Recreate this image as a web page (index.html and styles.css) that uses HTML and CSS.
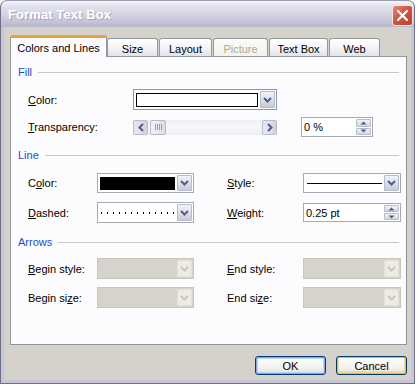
FILE: index.html
```html
<!DOCTYPE html>
<html>
<head>
<meta charset="utf-8">
<link rel="stylesheet" href="styles.css">
</head>
<body>
<div class="win">
  <div class="titlebar">
    <span class="title">Format Text Box</span>
    <span class="close"><svg width="13" height="13" viewBox="0 0 13 13"><path d="M2 2 L11 11 M11 2 L2 11" stroke="#fff" stroke-width="2.2" stroke-linecap="round"/></svg></span>
  </div>
  <div class="client">
    <div class="tabs">
      <div class="tab active t1">Colors and Lines</div>
      <div class="tab t2">Size</div>
      <div class="tab t3">Layout</div>
      <div class="tab disabled t4">Picture</div>
      <div class="tab t5">Text Box</div>
      <div class="tab t6">Web</div>
    </div>
    <div class="panel">
      <div class="section first"><span>Fill</span><i></i></div>
      <div class="fillrow r-color">
        <span class="lbl"><u>C</u>olor:</span>
        <div class="combo focus">
          <div class="field"><div class="swatch white"></div></div>
          <div class="dbtn"><svg width="9" height="6" viewBox="0 0 9 6"><path d="M1 1 L4.5 4.5 L8 1" fill="none" stroke="#4d6185" stroke-width="2"/></svg></div>
        </div>
      </div>
      <div class="fillrow r-trans">
        <span class="lbl"><u>T</u>ransparency:</span>
        <div class="scroll">
          <div class="sbtn"><svg width="6" height="9" viewBox="0 0 6 9"><path d="M5 1 L1.5 4.5 L5 8" fill="none" stroke="#4d6185" stroke-width="2"/></svg></div>
          <div class="thumb"><i></i><i></i><i></i><i></i></div>
          <div class="track"></div>
          <div class="sbtn"><svg width="6" height="9" viewBox="0 0 6 9"><path d="M1 1 L4.5 4.5 L1 8" fill="none" stroke="#4d6185" stroke-width="2"/></svg></div>
        </div>
        <div class="spin s-trans">
          <span class="val">0 %</span>
          <div class="arrows">
            <div class="ab"><svg width="7" height="4" viewBox="0 0 7 4"><path d="M0.5 3.5 L3.5 0.5 L6.5 3.5 Z" fill="#4d6185"/></svg></div>
            <div class="ab"><svg width="7" height="4" viewBox="0 0 7 4"><path d="M0.5 0.5 L3.5 3.5 L6.5 0.5 Z" fill="#4d6185"/></svg></div>
          </div>
        </div>
      </div>

      <div class="section s-line"><span>Line</span><i></i></div>
      <div class="grow g1">
        <span class="lbl">C<u>o</u>lor:</span>
        <div class="combo">
          <div class="field"><div class="swatch black"></div></div>
          <div class="dbtn"><svg width="9" height="6" viewBox="0 0 9 6"><path d="M1 1 L4.5 4.5 L8 1" fill="none" stroke="#4d6185" stroke-width="2"/></svg></div>
        </div>
        <span class="lbl"><u>S</u>tyle:</span>
        <div class="combo">
          <div class="field"><div class="solid"></div></div>
          <div class="dbtn"><svg width="9" height="6" viewBox="0 0 9 6"><path d="M1 1 L4.5 4.5 L8 1" fill="none" stroke="#4d6185" stroke-width="2"/></svg></div>
        </div>
      </div>
      <div class="grow g2">
        <span class="lbl"><u>D</u>ashed:</span>
        <div class="combo">
          <div class="field"><div class="dots"></div></div>
          <div class="dbtn"><svg width="9" height="6" viewBox="0 0 9 6"><path d="M1 1 L4.5 4.5 L8 1" fill="none" stroke="#4d6185" stroke-width="2"/></svg></div>
        </div>
        <span class="lbl"><u>W</u>eight:</span>
        <div class="spin s-weight">
          <span class="val">0.25 pt</span>
          <div class="arrows">
            <div class="ab"><svg width="7" height="4" viewBox="0 0 7 4"><path d="M0.5 3.5 L3.5 0.5 L6.5 3.5 Z" fill="#4d6185"/></svg></div>
            <div class="ab"><svg width="7" height="4" viewBox="0 0 7 4"><path d="M0.5 0.5 L3.5 3.5 L6.5 0.5 Z" fill="#4d6185"/></svg></div>
          </div>
        </div>
      </div>

      <div class="section s-arrows"><span>Arrows</span><i></i></div>
      <div class="grow g3">
        <span class="lbl"><u>B</u>egin style:</span>
        <div class="combo dis">
          <div class="field"></div>
          <div class="dbtn"><svg width="9" height="6" viewBox="0 0 9 6"><path d="M1 1 L4.5 4.5 L8 1" fill="none" stroke="#c9c7ba" stroke-width="2"/></svg></div>
        </div>
        <span class="lbl"><u>E</u>nd style:</span>
        <div class="combo dis">
          <div class="field"></div>
          <div class="dbtn"><svg width="9" height="6" viewBox="0 0 9 6"><path d="M1 1 L4.5 4.5 L8 1" fill="none" stroke="#c9c7ba" stroke-width="2"/></svg></div>
        </div>
      </div>
      <div class="grow g4">
        <span class="lbl">Begin si<u>z</u>e:</span>
        <div class="combo dis">
          <div class="field"></div>
          <div class="dbtn"><svg width="9" height="6" viewBox="0 0 9 6"><path d="M1 1 L4.5 4.5 L8 1" fill="none" stroke="#c9c7ba" stroke-width="2"/></svg></div>
        </div>
        <span class="lbl">End si<u>z</u>e:</span>
        <div class="combo dis">
          <div class="field"></div>
          <div class="dbtn"><svg width="9" height="6" viewBox="0 0 9 6"><path d="M1 1 L4.5 4.5 L8 1" fill="none" stroke="#c9c7ba" stroke-width="2"/></svg></div>
        </div>
      </div>
    </div>
    <div class="buttons">
      <div class="btn ok">OK</div>
      <div class="btn cancel">Cancel</div>
    </div>
  </div>
</div>
</body>
</html>
```

FILE: styles.css
```css
html, body {
  margin: 0;
  padding: 0;
}
body {
  width: 419px;
  height: 387px;
  overflow: hidden;
  background: #ffffff;
  font-family: "Liberation Sans", Arial, sans-serif;
  font-size: 11px;
  color: #000;
}
.win {
  width: 415px;
  height: 384px;
  box-sizing: border-box;
  border: 1px solid #6f6f86;
  border-top-color: #9a9ab0;
  border-radius: 7px 7px 0 0;
  background: #c6c6d8;
  display: flex;
  flex-direction: column;
  overflow: hidden;
}
.titlebar {
  height: 26px;
  flex: none;
  display: flex;
  align-items: center;
  justify-content: space-between;
  padding: 0 1px 0 7px;
  background: linear-gradient(to bottom, #f6f6fa 0%, #e4e4ee 18%, #d4d4e2 50%, #c4c4d8 80%, #b6b6cc 100%);
  border-radius: 6px 6px 0 0;
}
.title {
  color: #ffffff;
  font-weight: bold;
  font-size: 13px;
  text-shadow: 1px 1px 0 #a6a6bc;
  letter-spacing: 0.1px;
}
.close {
  width: 21px;
  height: 21px;
  box-sizing: border-box;
  border: 1px solid #f4e8e8;
  border-radius: 3px;
  background: linear-gradient(135deg, #e88a7c 0%, #d1563f 45%, #bf3d2c 100%);
  display: flex;
  align-items: center;
  justify-content: center;
  margin-top: 2px;
}
.client {
  flex: 1;
  margin: 0 3px 3px 3px;
  background: #d5d2cb;
  display: flex;
  flex-direction: column;
  padding: 8px 3px 0 6px;
}
.tabs {
  display: flex;
  align-items: flex-end;
  height: 21px;
  position: relative;
  z-index: 2;
}
.tab {
  box-sizing: border-box;
  height: 18px;
  border: 1px solid #919b9c;
  border-bottom: none;
  border-radius: 3px 3px 0 0;
  background: linear-gradient(to bottom, #ffffff 0%, #f4f4f8 50%, #e2e2ea 100%);
  display: flex;
  align-items: center;
  justify-content: center;
  padding-top: 2px;
  margin-right: 1px;
}
.tab.active {
  height: 22px;
  margin-bottom: -1px;
  background: #fcfcfe;
  border-top: 3px solid #e8a23c;
  padding-top: 0;
  margin-right: 0;
}
.tab.disabled {
  color: #aca899;
  background: linear-gradient(to bottom, #fbfbf7 0%, #f3f2ec 100%);
}
.t1 { width: 97px; }
.t2 { width: 51px; margin-right: 1px; }
.t3 { width: 53px; }
.t4 { width: 55px; margin-right: 1px; }
.t5 { width: 59px; }
.t6 { width: 51px; }

.panel {
  box-sizing: border-box;
  width: 397px;
  height: 289px;
  border: 1px solid #919b9c;
  border-right-color: #8c9495;
  border-bottom-color: #8c9495;
  background: #fcfcfe;
  padding: 0 7px;
  display: flex;
  flex-direction: column;
}
.section {
  display: flex;
  align-items: center;
  height: 14px;
  color: #1a4cc8;
}
.section i {
  flex: 1;
  height: 1px;
  background: #c8c8c0;
  margin-left: 6px;
}
.section.first { margin-top: 8px; }
.s-line { margin-top: 11px; }
.s-arrows { margin-top: 12px; }

.lbl {
  white-space: nowrap;
}
u { text-decoration: underline; text-underline-offset: 1px; }

.fillrow {
  display: grid;
  grid-template-columns: 105px 144px 24px 72px;
  align-items: center;
  padding-left: 10px;
}
.fillrow .spin { grid-column: 4; }
.r-color { height: 21px; margin-top: 10px; }
.r-trans { height: 20px; margin-top: 7px; }

.grow {
  display: grid;
  grid-template-columns: 69px 97px 33px 76px 98px;
  align-items: center;
  padding-left: 10px;
}
.grow > :nth-child(3) { grid-column: 4; }
.g1 { height: 20px; margin-top: 11px; }
.g2 { height: 21px; margin-top: 9px; }
.g3 { height: 21px; margin-top: 9px; }
.g4 { height: 21px; margin-top: 8px; }

.combo {
  box-sizing: border-box;
  height: 100%;
  border: 1px solid #a5acb5;
  background: #ffffff;
  display: flex;
  padding: 1px;
}
.combo.focus {
  border-color: #7f9db9;
}
.combo .field {
  flex: 1;
  display: flex;
  align-items: center;
  padding: 1px 2px 1px 1px;
}
.swatch {
  flex: 1;
  height: 100%;
  box-sizing: border-box;
}
.swatch.white {
  border: 1px solid #000;
  background: #fff;
  height: 14px;
}
.swatch.black {
  background: #000;
  height: 13px;
}
.solid {
  flex: 1;
  height: 1px;
  background: #000;
  margin-left: 1px;
}
.dots {
  flex: 1;
  height: 2px;
  background-image: linear-gradient(to right, #000 0, #000 1px, transparent 1px);
  background-size: 6px 2px;
  background-position: 1px 0;
  margin-left: 0;
}
.dbtn {
  width: 15px;
  box-sizing: border-box;
  border: 1px solid #b6bccc;
  border-radius: 1px;
  background: linear-gradient(to bottom, #f2f3f8 0%, #dcdeea 55%, #c6c9d8 100%);
  display: flex;
  align-items: center;
  justify-content: center;
}
.combo.dis {
  background: #d6d3cd;
  border-color: #c9c7ba;
}
.combo.dis .dbtn {
  background: #ecebe6;
  border-color: #e2e0d8;
}

.scroll {
  height: 15px;
  display: flex;
  box-sizing: border-box;
  background: linear-gradient(to bottom, #efeff3 0%, #f8f8fa 50%, #eeeef2 100%);
}
.sbtn {
  width: 15px;
  box-sizing: border-box;
  border: 1px solid #b6bccc;
  border-radius: 2px;
  background: linear-gradient(to right, #e8e9f0 0%, #dcdde8 60%, #cdcfdc 100%);
  display: flex;
  align-items: center;
  justify-content: center;
}
.thumb {
  width: 16px;
  margin-left: 2px;
  box-sizing: border-box;
  border: 1px solid #b6bccc;
  border-radius: 2px;
  background: linear-gradient(to right, #f2f2f6, #dcdde6);
  display: flex;
  align-items: center;
  justify-content: center;
  gap: 1px;
}
.thumb i {
  width: 1px;
  height: 6px;
  background: #9a9db0;
}
.track { flex: 1; }

.spin {
  box-sizing: border-box;
  height: 20px;
  border: 1px solid #a5acb5;
  background: #fff;
  display: flex;
  align-items: center;
  padding: 1px 1px 1px 2px;
}
.s-weight { height: 19px; }
.spin .val {
  flex: 1;
}
.arrows {
  width: 15px;
  height: 100%;
  display: flex;
  flex-direction: column;
  gap: 1px;
}
.ab {
  flex: 1;
  box-sizing: border-box;
  border: 1px solid #b6bccc;
  border-radius: 1px;
  background: linear-gradient(to bottom, #f2f3f8 0%, #d4d6e2 100%);
  display: flex;
  align-items: center;
  justify-content: center;
}

.buttons {
  display: flex;
  justify-content: flex-end;
  gap: 10px;
  margin-top: 11px;
  padding-right: 1px;
}
.btn {
  box-sizing: border-box;
  width: 71px;
  height: 19px;
  border: 1px solid #003c74;
  border-radius: 3px;
  display: flex;
  align-items: center;
  justify-content: center;
  background: linear-gradient(to bottom, #ffffff 0%, #f3f3ef 60%, #e2e1da 100%);
}
.btn.ok {
  box-shadow: inset 0 0 0 1px #8aa6e4, inset 0 0 0 2px #c2d3fa;
}
.btn.cancel {
  box-shadow: inset 0 0 0 1px #f8b247, inset 0 -1px 0 2px #fcd68a;
}
```
